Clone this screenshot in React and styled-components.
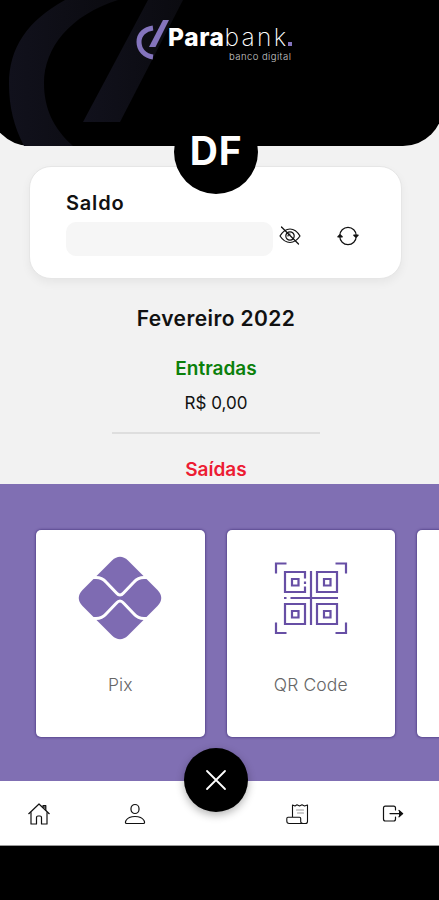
import React from 'react'
import styled, { createGlobalStyle } from 'styled-components'

const GlobalStyle = createGlobalStyle`
  * {
    box-sizing: border-box;
  }
  body {
    margin: 0;
    background-color: #000;
    font-family: Inter, Roboto, sans-serif;
  }
`

const Screen = styled.div`
  width: 439px;
  height: 900px;
  overflow: hidden;
  background-color: #000;
`
const Content = styled.main`
  height: 484px;
  overflow: hidden;
  background-color: #f2f2f2;
`
const Header = styled.header`
  position: relative;
  height: 146px;
  margin: 0 -4px 0 -10px;
  border-radius: 0 0 40px 40px;
  background-color: #000;
`
const Watermark = styled.svg`
  position: absolute;
  top: 0;
  left: 10px;
`
const Brand = styled.div`
  position: relative;
  display: flex;
  padding: 20px 0 0 146px;
`
const BrandMark = styled.svg`
  flex: none;
`
const BrandText = styled.div`
  width: 130px;
  color: #fff;
`
const BrandName = styled.div`
  display: flex;
  height: 30px;
  margin-left: -1px;
  font-size: 24.5px;
  line-height: 35px;
  white-space: nowrap;
`
const NamePart = styled.span`
  font-weight: ${props => props.$weight};
  letter-spacing: ${props => props.$spacing}px;
  color: ${props => props.$color || '#fff'};
`
const Dot = styled.span`
  width: 4px;
  height: 4px;
  margin-top: 22px;
  background-color: #8474bd;
`
const Tagline = styled.div`
  padding-left: 60px;
  font-size: 9.5px;
  font-weight: 300;
  line-height: 13px;
  letter-spacing: 0.45px;
  white-space: nowrap;
  color: #ccc;
`
const Avatar = styled.div`
  position: absolute;
  left: 184px;
  top: 110px;
  width: 84px;
  height: 84px;
  border-radius: 50%;
  background-color: #000;
  color: #fff;
  font-size: 39px;
  font-weight: 700;
  line-height: 82px;
  letter-spacing: 0.8px;
  text-align: center;
`
const Balance = styled.section`
  width: 373px;
  height: 113px;
  margin: 20px 0 0 29px;
  padding: 24px 36px 0 36px;
  border: 1px solid #e6e6e6;
  border-radius: 22px;
  background-color: #fff;
  box-shadow: 0 4px 10px rgba(0, 0, 0, 0.05);
`
const Label = styled.h2`
  margin: 0;
  font-size: ${props => props.$size || 20}px;
  font-weight: ${props => props.$weight || 600};
  line-height: 24px;
  letter-spacing: ${props => props.$spacing || 0}px;
  color: ${props => props.$color || '#111'};
`
const BalanceRow = styled.div`
  display: flex;
  align-items: center;
  height: 34px;
  margin-top: 7px;
`
const HiddenValue = styled.div`
  width: 207px;
  height: 34px;
  border-radius: 10px;
  background-color: #f6f6f6;
`
const IconButton = styled.button`
  display: flex;
  flex: none;
  margin: 0 0 6px ${props => props.$gap}px;
  padding: 0;
  border: none;
  background: none;
`
const Summary = styled.section`
  display: flex;
  flex-direction: column;
  align-items: center;
  width: 432px;
  padding-top: 28px;
`
const Entry = styled.div`
  display: flex;
  flex-direction: column;
  align-items: center;
  gap: 10px;
  margin-top: ${props => props.$top}px;
`
const Divider = styled.div`
  width: 208px;
  height: 2px;
  margin-top: 17px;
  background-color: #dedede;
`
const Services = styled.section`
  display: flex;
  gap: 22px;
  height: 297px;
  padding: 46px 0 0 36px;
  overflow: hidden;
  background-color: #806fb3;
`
const ServiceCard = styled.div`
  display: flex;
  flex: none;
  flex-direction: column;
  align-items: center;
  width: 168.5px;
  height: 206.5px;
  padding-top: 26px;
  border-radius: 5px;
  background-color: #fff;
  box-shadow: 0 0 2px 1px rgba(72, 55, 128, 0.65);
`
const ServiceName = styled.div`
  margin-top: 33px;
  font-size: 17.5px;
  font-weight: 300;
  line-height: 24px;
  letter-spacing: ${props => props.$spacing}px;
  color: #666;
`
const NavBar = styled.nav`
  position: relative;
  display: grid;
  grid-template-columns: 78px 114px 48px 115px 75px;
  align-items: center;
  justify-items: center;
  height: 65px;
  padding-top: 1px;
  border-bottom: 1px solid #999;
  background-color: #fff;
`
const CloseButton = styled.button`
  position: absolute;
  top: -33.5px;
  left: 184px;
  display: flex;
  align-items: center;
  justify-content: center;
  width: 64px;
  height: 64px;
  padding: 0;
  border: none;
  border-radius: 50%;
  background-color: #000;
  box-shadow: 0 3px 8px rgba(0, 0, 0, 0.3);
`
const LineIcon = styled.svg`
  display: block;
  fill: none;
  stroke: ${props => props.$color || '#111'};
  stroke-width: ${props => props.$stroke || 1.2};
  stroke-linecap: round;
  stroke-linejoin: round;
`

const EyeOff = () => (
  <LineIcon width="22" height="20" viewBox="0 0 22 20">
    <path d="M1 10C4 5 7.500 3 11 3s7 2 10 7c-3 4.500-6.500 6.500-10 6.500S4 14.500 1 10z" />
    <circle cx="11" cy="10" r="4.200" />
    <path d="M9 10a2 2 0 0 1 2-2" />
    <path d="M2.500 1l17 17" />
  </LineIcon>
)

const Refresh = () => (
  <LineIcon width="22" height="20" viewBox="0 0 22 20">
    <path d="M2.800 9.500A8.200 8.200 0 0 1 19.200 9.500M19.200 10.500A8.200 8.200 0 0 1 2.800 10.500" />
    <path d="M.9 10.800L3 8.800l2.200 2zM16.800 9.200l2.200 2 2.100-2z" fill="#111" />
  </LineIcon>
)

// rounded diamond cut by two white waves
const PixIcon = () => (
  <svg width="84" height="84" viewBox="0 0 84 84" fill="#7e6bb2">
    <path d="M34 4.500Q42-3 50 4.500L79.500 34Q87 42 79.500 50L50 79.500Q42 87 34 79.500L4.500 50Q-3 42 4.500 34z" />
    <g fill="none" stroke="#fff" strokeWidth="3">
      <path d="M15 21.500H18Q24 21.500 28 26L38.500 37Q42 41 45.500 37L56 26Q60 21.500 66 21.500H69" />
      <path d="M15 62.500H18Q24 62.500 28 58L38.500 47Q42 43 45.500 47L56 58Q60 62.500 66 62.500H69" />
    </g>
  </svg>
)

const QrIcon = () => (
  <svg width="84" height="84" viewBox="0.5 0.5 84 84" fill="none" stroke="#674fa5" strokeWidth="2.200">
    <path d="M7.500 18V8H18M67 8h10.500v10M77.500 67v10.500H67M18 77.500H7.500V67" />
    <path d="M36.500 23v-6.500h-20v20h20V31M36.500 26v2.500" />
    <path d="M48.500 16.500h20v20h-20zM16.500 48.500h20v20h-20zM48.500 48.500h20v20h-20z" />
    <path d="M23.500 23.500h6.500v6.500h-6.500zM55.500 23.500H62v6.500h-6.500zM23.500 55.500h6.500V62h-6.500zM55.500 55.500H62V62h-6.500z" />
    <path d="M42.500 15.500v54M22 42.500h47.500M15.500 42.500h2.500" />
  </svg>
)

const Home = () => (
  <LineIcon width="22" height="22" viewBox="0 0 22 22">
    <path d="M.8 10.700L11 1l10.200 9.700" />
    <path d="M3 9.500V21h5.500v-6.500q0-1.500 1.500-1.500h2q1.500 0 1.500 1.500V21H19V9.500" />
    <path d="M15 4.500V2.500h2.800v4.700" fill="#666" />
  </LineIcon>
)

const Person = () => (
  <LineIcon width="22" height="22" viewBox="0 0 22 22">
    <rect x="7" y="1.500" width="8" height="9" rx="4" />
    <path d="M2.500 20.500C1.200 20.500 1.200 19 2 17.500c1.500-2.500 5-4 9-4s7.500 1.500 9 4c.8 1.500.8 3-.5 3z" />
  </LineIcon>
)

const Receipt = () => (
  <LineIcon width="23" height="22" viewBox="0 0 23 22" $stroke="1.100">
    <path d="M6.500 14V2l2.500 1 2-1.200L13.500 3 16 1.800 18.500 3l3-1v16.500q0 2-2 2H3.200Q.8 20.500.8 18v-2.500q0-1.200 1.200-1.200h11.500q1.200 0 1.200 1.200v3q0 2 2.300 2" />
    <path d="M10.500 7h7M11.500 10h6" stroke="#999" />
  </LineIcon>
)

const Exit = () => (
  <LineIcon width="22" height="18" viewBox="0 0 22 18">
    <path d="M13.500 5V3q0-1.800-1.800-1.800H3.300Q1.500 1.200 1.500 3v11q0 2 1.800 2h8.400q1.800 0 1.800-2v-2" />
    <path d="M8 8.600h12" />
    <path d="M17 5.500l3.700 3.100L17 11.800" fill="#111" />
  </LineIcon>
)

const App = () => {
  return (
    <Screen>
      <GlobalStyle />
      <Content>
        <Header>
          <Watermark width="200" height="146" viewBox="0 0 200 146">
            <defs>
              <linearGradient id="fade" x1="0" x2="1" y1="0" y2="0">
                <stop offset="0" stopColor="#11111c" />
                <stop offset="1" stopColor="#0b0b10" />
              </linearGradient>
            </defs>
            <path d="M65 0C27 21 9 48 9 84c0 23 5 43 15 62h49C53 128 44 108 44 83 44 48 70 15 118 0z" fill="url(#fade)" />
            <path d="M83 122h37L183 0h-35z" fill="url(#fade)" />
          </Watermark>
          <Brand>
            <BrandMark width="33" height="42" viewBox="0 0 33 42">
              <path d="M17 8C9 9 3 14 3 22s6 14 14 15" fill="none" stroke="#8474bd" strokeWidth="5" />
              <path d="M27 0h6L19.500 27H13z" fill="#8474bd" />
            </BrandMark>
            <BrandText>
              <BrandName>
                <NamePart $weight={800} $spacing={0.6}>Para</NamePart>
                <NamePart $weight={200} $spacing={2.3}>bank</NamePart>
                <Dot />
              </BrandName>
              <Tagline>banco digital</Tagline>
            </BrandText>
          </Brand>
          <Avatar>DF</Avatar>
        </Header>
        <Balance>
          <Label $spacing={0.8}>Saldo</Label>
          <BalanceRow>
            <HiddenValue />
            <IconButton $gap={6}><EyeOff /></IconButton>
            <IconButton $gap={36}><Refresh /></IconButton>
          </BalanceRow>
        </Balance>
        <Summary>
          <Label $size={21} $spacing={0.4}>Fevereiro 2022</Label>
          <Entry $top={26}>
            <Label $size={19} $color="#0b800b">Entradas</Label>
            <Label $size={17} $weight={400}>R$ 0,00</Label>
          </Entry>
          <Divider />
          <Entry $top={24}>
            <Label $size={19} $color="#ed1c33">Saídas</Label>
          </Entry>
        </Summary>
      </Content>
      <Services>
        <ServiceCard>
          <PixIcon />
          <ServiceName $spacing={0}>Pix</ServiceName>
        </ServiceCard>
        <ServiceCard>
          <QrIcon />
          <ServiceName $spacing={0.1}>QR Code</ServiceName>
        </ServiceCard>
        <ServiceCard />
      </Services>
      <NavBar>
        <Home />
        <Person />
        <span />
        <Receipt />
        <Exit />
        <CloseButton>
          <LineIcon width="22" height="22" viewBox="0 0 22 22" $color="#fff" $stroke="1.800">
            <path d="M2 2l18 18M20 2L2 20" />
          </LineIcon>
        </CloseButton>
      </NavBar>
    </Screen>
  )
}

export default App
